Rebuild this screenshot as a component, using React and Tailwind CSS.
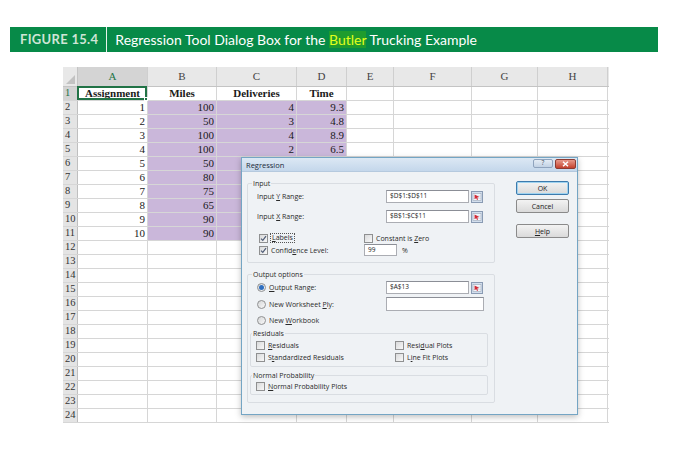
import React from "react";

const colW = ["w-[70px]", "w-[69px]", "w-[80px]", "w-[50px]", "w-[47px]", "w-[78px]", "w-[66px]", "w-[70px]"];
const letters = ["A", "B", "C", "D", "E", "F", "G", "H"];

// C and D from row 6 down sit under the dialog, so they are left out
const data = [
  ["1", "100", "4", "9.3"],
  ["2", "50", "3", "4.8"],
  ["3", "100", "4", "8.9"],
  ["4", "100", "2", "6.5"],
  ["5", "50", "", ""],
  ["6", "80", "", ""],
  ["7", "75", "", ""],
  ["8", "65", "", ""],
  ["9", "90", "", ""],
  ["10", "90", "", ""],
];

const heads = ["Assignment", "Miles", "Deliveries", "Time"];

// small Windows 7 style controls
const Check = ({ checked }) => (
  <span className="w-[9px] h-[9px] shrink-0 border border-[#8f9091] bg-gradient-to-br from-[#d9dadb] to-[#f8f8f8] flex items-center justify-center">
    {checked && (
      <svg width="7" height="7" viewBox="0 0 7 7">
        <polyline points="1,3.6 2.8,5.4 6,1.2" fill="none" stroke="#4d5b75" strokeWidth="1.2" />
      </svg>
    )}
  </span>
);

const Radio = ({ on }) => (
  <span className="w-[9px] h-[9px] shrink-0 rounded-full border border-[#8f9091] bg-gradient-to-br from-[#d6d7d8] to-[#f8f8f8] flex items-center justify-center">
    {on && <span className="w-[5px] h-[5px] rounded-full bg-[#2f6fc0]" />}
  </span>
);

const RangeIcon = () => (
  <svg width="12" height="12" viewBox="0 0 12 12" className="shrink-0">
    <rect x="0.5" y="0.5" width="11" height="11" fill="#d3dfee" stroke="#8a9bb3" />
    <rect x="2" y="2.5" width="8" height="7" fill="#f4f7fb" stroke="#9aa7b8" strokeWidth="0.6" />
    <line x1="2" y1="5" x2="10" y2="5" stroke="#b7c2d0" strokeWidth="0.5" />
    <line x1="2" y1="7.3" x2="10" y2="7.3" stroke="#b7c2d0" strokeWidth="0.5" />
    <path d="M3.6 3.6 L8.4 6 L6.2 6.6 L7 8.6 L6 9 L5.2 7 L3.6 8.2 Z" fill="#d42a35" />
  </svg>
);

const Field = ({ w, h = "h-[13px]", children }) => (
  <div className={`${w} ${h} shrink-0 border border-[#abadb3] border-t-[#8b8e96] bg-white px-[3px] flex items-center text-[6.5px] text-[#222]`}>
    {children}
  </div>
);

const Btn = ({ children, def, extra }) => (
  <div
    className={`w-[53px] h-[14px] rounded-[2px] border ${def ? "border-[#3d7bad] shadow-[inset_0_0_0_1px_#9fd3f0]" : "border-[#8a8a8a]"} bg-gradient-to-b from-[#f3f3f3] to-[#dadada] flex items-center justify-center text-[7px] text-[#222] ${extra}`}
  >
    {children}
  </div>
);

function Dialog() {
  return (
    <div className="absolute left-[178px] top-[90px] w-[337px] h-[258px] border border-[#74a5c4] bg-[#eff2f5] shadow-[0_2px_6px_rgba(0,0,0,0.25)] font-['Open_Sans',sans-serif] text-[#2a2a2a]">
      {/* title bar */}
      <div className="h-[14px] flex items-start bg-gradient-to-b from-[#dce8f4] to-[#c4d7eb] border-b border-[#b5c9de]">
        <span className="pl-[4px] leading-[14px] text-[7.5px] text-[#1b2a3a]">Regression</span>
        <div className="ml-auto mt-[1px] mr-[1px] flex gap-[2px]">
          <div className="w-[20px] h-[9px] rounded-[2px] border border-[#8fa3bd] bg-gradient-to-b from-[#e4ecf5] to-[#c2d2e4] flex items-center justify-center text-[6.5px] leading-none text-[#3a4a60]">
            ?
          </div>
          <div className="w-[21px] h-[10px] rounded-[2px] border border-[#8d3b31] bg-gradient-to-b from-[#e7988a] to-[#c3402d] flex items-center justify-center">
            <svg width="7" height="6" viewBox="0 0 7 6">
              <path d="M1 0.8 L6 5.2 M6 0.8 L1 5.2" stroke="#ffffff" strokeWidth="1.5" />
            </svg>
          </div>
        </div>
      </div>

      <div className="flex">
        {/* left column */}
        <div className="ml-[5px] mt-[7px] w-[248px]">
          <fieldset className="border border-[#d9dde2] rounded-[2px] pb-[6px]">
            <legend className="ml-[4px] px-[1px] text-[7px] leading-[9px]">Input</legend>
            <div className="flex items-center h-[13px] mt-[2px] pl-[9px]">
              <span className="w-[129px] text-[7px]">
                Input <u>Y</u> Range:
              </span>
              <Field w="w-[83px]">$D$1:$D$11</Field>
              <span className="ml-[2px]">
                <RangeIcon />
              </span>
            </div>
            <div className="flex items-center h-[13px] mt-[7px] pl-[9px]">
              <span className="w-[129px] text-[7px]">
                Input <u>X</u> Range:
              </span>
              <Field w="w-[83px]">$B$1:$C$11</Field>
              <span className="ml-[2px]">
                <RangeIcon />
              </span>
            </div>
            <div className="flex items-center h-[10px] mt-[10px] pl-[11px]">
              <div className="w-[105px] flex items-center">
                <Check checked />
                <span className="ml-[2px] px-[1px] border border-dotted border-[#555] text-[7px] leading-[8px]">
                  <u>L</u>abels
                </span>
              </div>
              <Check />
              <span className="ml-[3px] text-[7px]">
                Constant is <u>Z</u>ero
              </span>
            </div>
            <div className="flex items-center h-[12px] mt-[1px] pl-[11px]">
              <div className="w-[105px] flex items-center">
                <Check checked />
                <span className="ml-[3px] text-[7px]">
                  Confid<u>e</u>nce Level:
                </span>
              </div>
              <Field w="w-[33px]" h="h-[12px]">99</Field>
              <span className="ml-[5px] text-[7px]">%</span>
            </div>
          </fieldset>

          <fieldset className="mt-[7px] border border-[#d9dde2] rounded-[2px] pb-[7px]">
            <legend className="ml-[4px] px-[1px] text-[7px] leading-[9px]">Output options</legend>
            <div className="flex items-center h-[13px] mt-[2px] pl-[9px]">
              <div className="w-[129px] flex items-center">
                <Radio on />
                <span className="ml-[3px] text-[7px]">
                  <u>O</u>utput Range:
                </span>
              </div>
              <Field w="w-[83px]">$A$13</Field>
              <span className="ml-[2px]">
                <RangeIcon />
              </span>
            </div>
            <div className="flex items-center h-[14px] mt-[3px] pl-[9px]">
              <div className="w-[129px] flex items-center">
                <Radio />
                <span className="ml-[3px] text-[7px]">
                  New Worksheet <u>P</u>ly:
                </span>
              </div>
              <Field w="w-[98px]" h="h-[14px]"></Field>
            </div>
            <div className="flex items-center h-[10px] mt-[4px] pl-[9px]">
              <Radio />
              <span className="ml-[3px] text-[7px]">
                New <u>W</u>orkbook
              </span>
            </div>

            <fieldset className="ml-[2px] mt-[4px] w-[238px] border border-[#d9dde2] rounded-[2px] pb-[4px]">
              <legend className="ml-[1px] px-[1px] text-[7px] leading-[9px]">Residuals</legend>
              <div className="flex items-center h-[10px] mt-[2px] pl-[5px]">
                <div className="w-[139px] flex items-center">
                  <Check />
                  <span className="ml-[3px] text-[7px]">
                    <u>R</u>esiduals
                  </span>
                </div>
                <Check />
                <span className="ml-[3px] text-[7px]">
                  Resi<u>d</u>ual Plots
                </span>
              </div>
              <div className="flex items-center h-[10px] mt-[2px] pl-[5px]">
                <div className="w-[139px] flex items-center">
                  <Check />
                  <span className="ml-[3px] text-[7px]">
                    S<u>t</u>andardized Residuals
                  </span>
                </div>
                <Check />
                <span className="ml-[3px] text-[7px]">
                  L<u>i</u>ne Fit Plots
                </span>
              </div>
            </fieldset>

            <fieldset className="ml-[2px] mt-[4px] w-[238px] border border-[#d9dde2] rounded-[2px] pb-[3px]">
              <legend className="ml-[1px] px-[1px] text-[7px] leading-[9px]">Normal Probability</legend>
              <div className="flex items-center h-[10px] mt-[1px] pl-[5px]">
                <Check />
                <span className="ml-[3px] text-[7px]">
                  <u>N</u>ormal Probability Plots
                </span>
              </div>
            </fieldset>
          </fieldset>
        </div>

        {/* buttons */}
        <div className="ml-[21px] mt-[9px] flex flex-col">
          <Btn def>OK</Btn>
          <Btn extra="mt-[4px]">Cancel</Btn>
          <Btn extra="mt-[11px]">
            <u>H</u>elp
          </Btn>
        </div>
      </div>
    </div>
  );
}

function Sheet() {
  const rows = [];
  for (let r = 1; r <= 24; r++) {
    const cells = [];
    for (let c = 0; c < 8; c++) {
      let txt = "";
      let align = "justify-end pr-[2px]";
      let bg = "";
      let extra = "";
      if (r === 1 && c < 4) {
        txt = heads[c];
        align = "justify-center";
        extra = "font-bold";
      } else if (r >= 2 && r <= 11 && c < 4) {
        txt = data[r - 2][c];
        if (c > 0) bg = "bg-[#cab7da]";
      }
      cells.push(
        <div
          key={c}
          className={`${colW[c]} h-full shrink-0 flex items-center border-r border-[#d6d6d6] ${align} ${bg} ${extra} relative`}
        >
          {txt}
          {r === 1 && c === 0 && (
            <div className="absolute -left-[1px] -top-[1px] right-0 bottom-0 border-2 border-[#217346]">
              <div className="absolute -right-[3px] -bottom-[3px] w-[4px] h-[4px] bg-[#217346] border border-white" />
            </div>
          )}
        </div>
      );
    }
    rows.push(
      <div key={r} className="flex h-[14px] border-b border-[#d6d6d6]">
        <div
          className={`w-[15px] h-full shrink-0 flex items-center pl-[2px] border-r border-[#bfbfbf] text-[10.5px] ${r === 1 ? "bg-[#d3d3d3] text-[#217346]" : "bg-[#e4e4e4] text-[#333]"}`}
        >
          {r}
        </div>
        {cells}
      </div>
    );
  }

  return (
    <div className="relative ml-[63px] mt-[15px] w-[546px] font-['Liberation_Serif',serif] text-[11px] leading-none text-[#1a1a1a]">
      {/* column headers */}
      <div className="flex h-[20px] bg-[#e8e8e8] border-b border-[#c4c4c4]">
        <div className="w-[15px] h-full shrink-0 border-r border-[#c4c4c4] flex items-end justify-end p-[2px]">
          <svg width="9" height="9" viewBox="0 0 9 9">
            <polygon points="9,0 9,9 0,9" fill="#c2c2c2" />
          </svg>
        </div>
        {letters.map((l, i) => (
          <div
            key={l}
            className={`${colW[i]} h-full shrink-0 flex items-center justify-center border-r border-[#cfcfcf] ${i === 0 ? "bg-[#d4d4d4] text-[#217346]" : "text-[#444]"}`}
          >
            {l}
          </div>
        ))}
      </div>
      {rows}
      <Dialog />
    </div>
  );
}

export default function App() {
  return (
    <div className="w-[691px] h-[459px] bg-white overflow-hidden">
      <div className="h-[27px]" />
      <div className="ml-[10px] w-[648px] h-[25px] bg-[#078a48] flex items-center font-['Lato',sans-serif]">
        <span className="pl-[10px] pr-[8px] text-[13px] font-bold text-[#cfe5d6] tracking-[0.3px]">FIGURE 15.4</span>
        <span className="w-px h-full bg-[#e8f3ec]" />
        <span className="pl-[8px] text-[14px] text-white">
          Regression Tool Dialog Box for the <span className="bg-[#1f9c2e] text-[#e2ff1c]">Butler</span> Trucking Example
        </span>
      </div>
      <Sheet />
    </div>
  );
}
